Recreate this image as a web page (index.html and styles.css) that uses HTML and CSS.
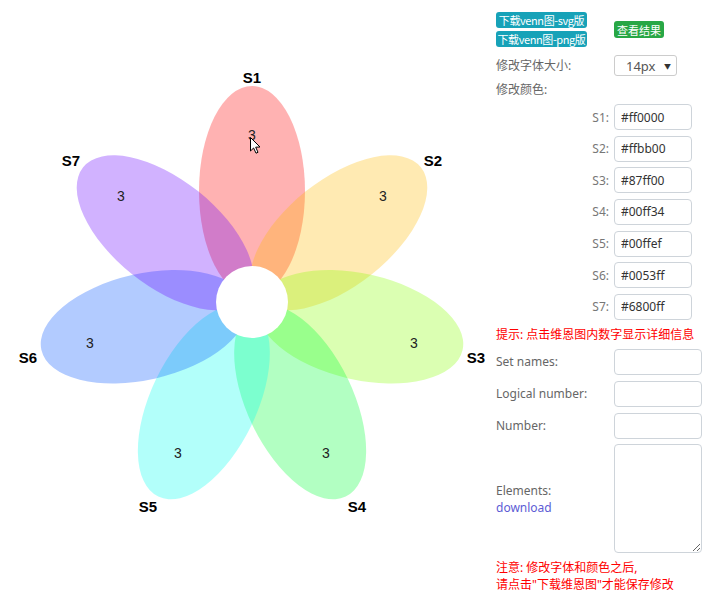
FILE: index.html
```html
<!DOCTYPE html>
<html lang="zh">
<head>
    <meta charset="UTF-8">
    <title>Venn 7</title>
    <link rel="stylesheet" href="styles.css">
</head>
<body>
    <div class="page">
        <svg class="venn" width="490" height="603" viewBox="0 0 490 603">
            <g class="petals">
                <ellipse cx="252" cy="191" rx="53" ry="105" fill="#ff0000" transform="rotate(0 252 302)"/>
                <ellipse cx="252" cy="191" rx="53" ry="105" fill="#ffbb00" transform="rotate(51.43 252 302)"/>
                <ellipse cx="252" cy="191" rx="53" ry="105" fill="#87ff00" transform="rotate(102.86 252 302)"/>
                <ellipse cx="252" cy="191" rx="53" ry="105" fill="#00ff34" transform="rotate(154.29 252 302)"/>
                <ellipse cx="252" cy="191" rx="53" ry="105" fill="#00ffef" transform="rotate(205.71 252 302)"/>
                <ellipse cx="252" cy="191" rx="53" ry="105" fill="#0053ff" transform="rotate(257.14 252 302)"/>
                <ellipse cx="252" cy="191" rx="53" ry="105" fill="#6800ff" transform="rotate(308.57 252 302)"/>
            </g>
            <circle class="core" cx="252" cy="302" r="36"/>

            <!-- counts -->
            <text class="count" x="252" y="140">3</text>
            <text class="count" x="383" y="201">3</text>
            <text class="count" x="414" y="348">3</text>
            <text class="count" x="326" y="458">3</text>
            <text class="count" x="178" y="458">3</text>
            <text class="count" x="90" y="348">3</text>
            <text class="count" x="121" y="201">3</text>

            <!-- set names -->
            <text class="set-name" x="252" y="83">S1</text>
            <text class="set-name" x="433" y="166">S2</text>
            <text class="set-name" x="476" y="363">S3</text>
            <text class="set-name" x="357" y="512">S4</text>
            <text class="set-name" x="148" y="512">S5</text>
            <text class="set-name" x="28" y="363">S6</text>
            <text class="set-name" x="71" y="166">S7</text>

            <path class="cursor" d="M250.5 137.5 L250.5 151 L253.6 148 L256 153.2 L258 152.3 L255.7 147.2 L260 147 Z"/>
        </svg>

        <div class="panel">
            <div class="actions">
                <div class="dl-buttons">
                    <button class="btn btn-info">下载venn图-svg版</button>
                    <button class="btn btn-info">下载venn图-png版</button>
                </div>
                <button class="btn btn-success">查看结果</button>
            </div>

            <div class="row font-row">
                <span class="row-label">修改字体大小:</span>
                <div class="select"><span>14px</span><span class="caret">▼</span></div>
            </div>

            <div class="color-title">修改颜色:</div>

            <div class="color-list">
                <div class="row color-row"><span class="row-label">S1:</span><input class="field color-field" value="#ff0000"></div>
                <div class="row color-row"><span class="row-label">S2:</span><input class="field color-field" value="#ffbb00"></div>
                <div class="row color-row"><span class="row-label">S3:</span><input class="field color-field" value="#87ff00"></div>
                <div class="row color-row"><span class="row-label">S4:</span><input class="field color-field" value="#00ff34"></div>
                <div class="row color-row"><span class="row-label">S5:</span><input class="field color-field" value="#00ffef"></div>
                <div class="row color-row"><span class="row-label">S6:</span><input class="field color-field" value="#0053ff"></div>
                <div class="row color-row"><span class="row-label">S7:</span><input class="field color-field" value="#6800ff"></div>
            </div>

            <div class="tip">提示: 点击维恩图内数字显示详细信息</div>

            <div class="info-list">
                <div class="row"><span class="row-label">Set names:</span><input class="field info-field"></div>
                <div class="row"><span class="row-label">Logical number:</span><input class="field info-field"></div>
                <div class="row"><span class="row-label">Number:</span><input class="field info-field"></div>
                <div class="row">
                    <span class="row-label">Elements:<br><a href="#" class="download">download</a></span>
                    <textarea class="field elements"></textarea>
                </div>
            </div>

            <div class="note">注意: 修改字体和颜色之后,<br>请点击"下载维恩图"才能保存修改</div>
        </div>
    </div>
</body>
</html>
```

FILE: styles.css
```css
body {
    margin: 0;
    background-color: #fff;
    font-family: "Noto Sans", "Noto Sans CJK SC", sans-serif;
}

.page {
    display: flex;
    width: 720px;
    height: 603px;
    overflow: hidden;
}

.venn {
    flex: none;
    display: block;
}

.petals ellipse {
    fill-opacity: 0.3;
}

.core {
    fill: #fff;
}

.count {
    font-family: "Liberation Sans", Arial, sans-serif;
    font-size: 14px;
    fill: #222;
    text-anchor: middle;
}

.set-name {
    font-family: "Liberation Sans", Arial, sans-serif;
    font-size: 15px;
    font-weight: bold;
    fill: #000;
    text-anchor: middle;
}

.cursor {
    fill: #fff;
    stroke: #000;
    stroke-width: 1;
    stroke-linejoin: round;
}

.panel {
    width: 218px;
    margin-left: 6px;
    padding-top: 12px;
    font-size: 12px;
    color: #666;
}

.actions {
    display: flex;
    align-items: center;
}

.dl-buttons {
    display: flex;
    flex-direction: column;
    gap: 3px;
    width: 118px;
}

.btn {
    border: none;
    border-radius: 3px;
    color: #fff;
    font-family: "Noto Sans CJK SC", sans-serif;
    font-size: 11px;
    line-height: 16px;
    letter-spacing: -0.4px;
    padding: 0;
    cursor: pointer;
}

.btn-info {
    background-color: #17a2b8;
    width: 91px;
    height: 16px;
}

.btn-success {
    background-color: #28a745;
    width: 50px;
    height: 17px;
    letter-spacing: 0;
}

.row {
    display: flex;
    align-items: center;
}

.row-label {
    flex: none;
    width: 113px;
    margin-right: 5px;
    line-height: 17px;
}

.font-row {
    margin-top: 8px;
}

.select {
    box-sizing: border-box;
    width: 63px;
    height: 21px;
    border: 1px solid #ccc;
    border-radius: 3px;
    display: flex;
    align-items: center;
    justify-content: space-between;
    padding: 0 5px 0 11px;
    font-size: 13px;
    color: #555;
}

.caret {
    font-size: 7px;
    color: #333;
}

.color-title {
    margin-top: 4px;
    line-height: 20px;
}

.color-list {
    display: flex;
    flex-direction: column;
    gap: 5.67px;
    margin-top: 4px;
}

.color-row .row-label {
    text-align: right;
    color: #777;
}

.field {
    box-sizing: border-box;
    border: 1px solid #ced4da;
    border-radius: 4px;
    font-family: "Noto Sans", sans-serif;
    font-size: 12px;
    color: #333;
    margin: 0;
}

.color-field {
    width: 78px;
    height: 26px;
    padding: 0 6px;
}

.tip {
    margin-top: 6px;
    line-height: 18px;
    color: #f00;
}

.info-list {
    display: flex;
    flex-direction: column;
    gap: 6px;
    margin-top: 5px;
}

.info-field {
    width: 88px;
    height: 26px;
}

.elements {
    width: 88px;
    height: 109px;
    resize: vertical;
    margin-top: -1px;
}

.download {
    color: #5d5dd5;
    text-decoration: none;
}

.note {
    margin-top: 6px;
    line-height: 17px;
    color: #f00;
}
```
